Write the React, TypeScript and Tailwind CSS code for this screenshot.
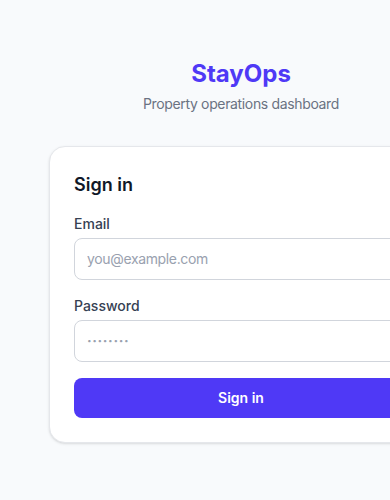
export default function App() {
  return (
    <div
      className="flex min-h-screen items-center bg-slate-50"
      style={{ fontFamily: "Inter, 'Noto Sans', sans-serif" }}
    >
      <div className="ml-[49px] w-96 shrink-0">
        <div className="text-center">
          <h1 className="text-2xl font-bold text-indigo-600">StayOps</h1>
          <p className="mt-1 text-sm tracking-tight text-gray-500">Property operations dashboard</p>
        </div>

        <div className="mt-8 rounded-2xl border border-gray-200 bg-white p-6 shadow-sm">
          <h2 className="mb-[15px] text-lg font-semibold text-gray-900">Sign in</h2>
          <div className="space-y-4">
            <div>
              <label className="mb-1 block text-sm font-medium text-gray-700">Email</label>
              <input
                type="email"
                placeholder="you@example.com"
                className="block w-full rounded-lg border border-gray-300 px-3 py-2.5 text-sm tracking-tight text-gray-900 placeholder:text-gray-400 outline-none"
              />
            </div>
            <div>
              <label className="mb-1 block text-sm font-medium text-gray-700">Password</label>
              <input
                type="text"
                placeholder="········"
                className="block w-full rounded-lg border border-gray-300 px-3 py-2.5 text-sm font-bold tracking-[0.6px] text-gray-900 placeholder:text-gray-400 outline-none"
              />
            </div>
            <button className="w-full rounded-lg bg-indigo-600 py-2.5 text-sm font-semibold text-white">
              Sign in
            </button>
          </div>
        </div>
      </div>
    </div>
  );
}
